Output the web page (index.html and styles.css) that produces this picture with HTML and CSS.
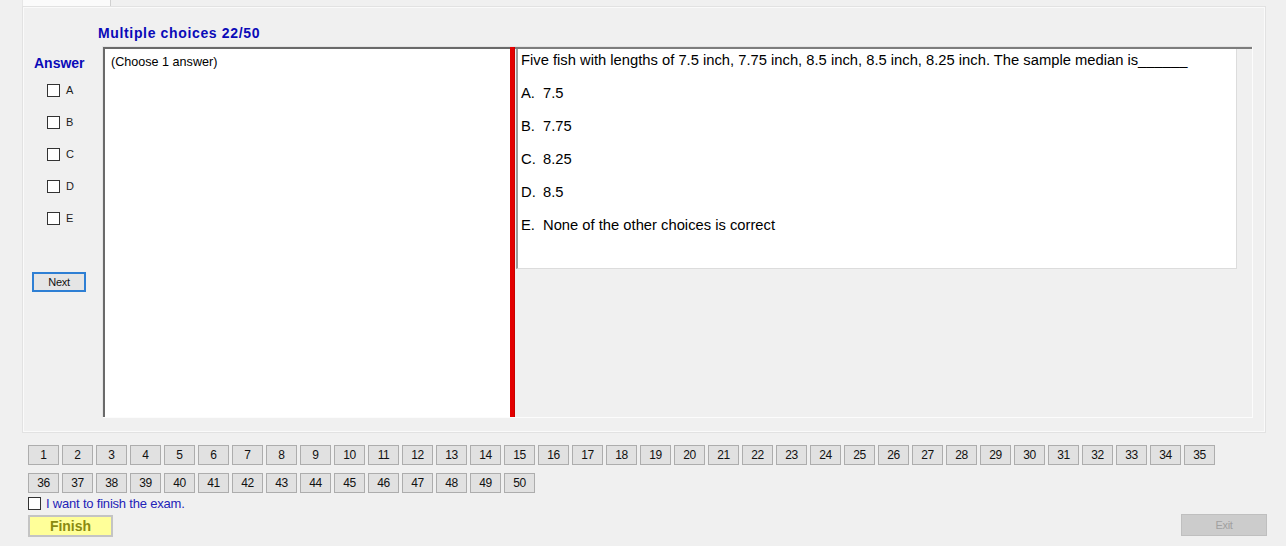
FILE: index.html
```html
<!DOCTYPE html>
<html>
<head>
<meta charset="utf-8">
<link rel="stylesheet" href="styles.css">
</head>
<body>
<div class="tabstrip"><div class="tab"></div></div>
<div class="panel">
  <div class="title">Multiple choices 22/50</div>
  <div class="main">
    <div class="answers">
      <div class="answer-label">Answer</div>
      <div class="opt"><span class="box"></span><span class="letter">A</span></div>
      <div class="opt"><span class="box"></span><span class="letter">B</span></div>
      <div class="opt"><span class="box"></span><span class="letter">C</span></div>
      <div class="opt"><span class="box"></span><span class="letter">D</span></div>
      <div class="opt"><span class="box"></span><span class="letter">E</span></div>
      <div class="next">Next</div>
    </div>
    <div class="content">
      <div class="left-pane">(Choose 1 answer)</div>
      <div class="splitter"></div>
      <div class="right-pane">
        <div class="question">
          <div class="q-text">Five fish with lengths of 7.5 inch, 7.75 inch, 8.5 inch, 8.5 inch, 8.25 inch. The sample median is______</div>
          <div class="choice"><span class="cl">A.</span>7.5</div>
          <div class="choice"><span class="cl">B.</span>7.75</div>
          <div class="choice"><span class="cl">C.</span>8.25</div>
          <div class="choice"><span class="cl">D.</span>8.5</div>
          <div class="choice"><span class="cl">E.</span>None of the other choices is correct</div>
        </div>
      </div>
    </div>
  </div>
</div>
<div class="bottom">
  <div class="nums">
    <div class="num">1</div><div class="num">2</div><div class="num">3</div><div class="num">4</div><div class="num">5</div><div class="num">6</div><div class="num">7</div><div class="num">8</div><div class="num">9</div><div class="num">10</div>
    <div class="num">11</div><div class="num">12</div><div class="num">13</div><div class="num">14</div><div class="num">15</div><div class="num">16</div><div class="num">17</div><div class="num">18</div><div class="num">19</div><div class="num">20</div>
    <div class="num">21</div><div class="num">22</div><div class="num">23</div><div class="num">24</div><div class="num">25</div><div class="num">26</div><div class="num">27</div><div class="num">28</div><div class="num">29</div><div class="num">30</div>
    <div class="num">31</div><div class="num">32</div><div class="num">33</div><div class="num">34</div><div class="num">35</div><div class="num">36</div><div class="num">37</div><div class="num">38</div><div class="num">39</div><div class="num">40</div>
    <div class="num">41</div><div class="num">42</div><div class="num">43</div><div class="num">44</div><div class="num">45</div><div class="num">46</div><div class="num">47</div><div class="num">48</div><div class="num">49</div><div class="num">50</div>
  </div>
  <div class="finish-check"><span class="box"></span><span class="finish-text">I want to finish the exam.</span></div>
  <div class="actions">
    <div class="finish">Finish</div>
    <div class="exit">Exit</div>
  </div>
</div>
</body>
</html>
```
FILE: styles.css
```css
html, body {
  margin: 0;
  padding: 0;
}
body {
  width: 1286px;
  height: 546px;
  background: #f0f0f0;
  font-family: "Liberation Sans", Arial, sans-serif;
  color: #000;
  overflow: hidden;
}
.tabstrip {
  height: 6px;
  padding-left: 22px;
}
.tab {
  width: 89px;
  height: 6px;
  background: #fbfbfb;
  border-right: 1px solid #d0d0d0;
  border-left: 1px solid #e6e6e6;
  box-sizing: border-box;
}
.panel {
  margin-left: 22px;
  width: 1244px;
  height: 427px;
  box-sizing: border-box;
  border: 1px solid #e2e2e2;
  background: #f0f0f0;
  box-shadow: inset 1px 1px 0 #fafafa, inset -1px -1px 0 #fafafa;
}
.title {
  margin-top: 18px;
  padding-left: 75px;
  height: 16px;
  line-height: 16px;
  font-size: 14px;
  font-weight: bold;
  letter-spacing: 0.65px;
  color: #0a0ab8;
}
.main {
  display: flex;
  margin-top: 5px;
}
.answers {
  width: 79px;
  display: flex;
  flex-direction: column;
}
.answer-label {
  margin-top: 9px;
  padding-left: 11px;
  height: 16px;
  line-height: 16px;
  font-size: 14px;
  font-weight: bold;
  color: #0a0ab8;
}
.opt {
  display: flex;
  align-items: center;
  height: 13px;
  margin-top: 19px;
  padding-left: 24px;
  font-size: 11px;
  color: #202020;
}
.answer-label + .opt {
  margin-top: 13px;
}
.box {
  width: 13px;
  height: 13px;
  box-sizing: border-box;
  border: 1px solid #333;
  background: #fff;
  display: inline-block;
}
.letter {
  margin-left: 6px;
  line-height: 13px;
}
.next {
  margin-top: 47px;
  margin-left: 9px;
  width: 54px;
  height: 20px;
  box-sizing: border-box;
  border: 2px solid #2e7fd4;
  background: #e5e5e5;
  font-size: 11px;
  line-height: 16px;
  text-align: center;
  color: #111;
  letter-spacing: -0.3px;
}
.content {
  width: 1151px;
  height: 372px;
  box-sizing: border-box;
  border-top: 1px solid #e4e4e4;
  border-left: 1px solid #e4e4e4;
  border-right: 1px solid #fcfcfc;
  border-bottom: 1px solid #fcfcfc;
  display: flex;
}
.left-pane {
  width: 407px;
  height: 100%;
  box-sizing: border-box;
  background: #fff;
  border-top: 2px solid #6a6a6a;
  border-left: 2px solid #6a6a6a;
  padding: 5px 0 0 6px;
  font-size: 12.6px;
  line-height: 16px;
}
.splitter {
  width: 5px;
  height: 100%;
  background: #e30000;
  box-shadow: inset -1px 0 0 #c80000;
}
.right-pane {
  flex: 1;
  height: 100%;
  box-sizing: border-box;
  border-top: 2px solid #7d7d7d;
  padding-left: 1px;
}
.question {
  width: 721px;
  height: 220px;
  box-sizing: border-box;
  background: #fff;
  border-left: 2px solid #9c9c9c;
  border-right: 1px solid #dcdcdc;
  border-bottom: 1px solid #dcdcdc;
  padding: 3px 0 0 3px;
  font-size: 14.75px;
  line-height: 17px;
}
.choice {
  margin-top: 16px;
}
.cl {
  display: inline-block;
  width: 22px;
}
.bottom {
  padding-left: 28px;
  padding-top: 12px;
}
.nums {
  display: grid;
  grid-template-columns: repeat(35, 31px);
  column-gap: 3px;
  row-gap: 8px;
}
.num {
  height: 20px;
  box-sizing: border-box;
  border: 1px solid #adadad;
  background: #e1e1e1;
  font-size: 12px;
  line-height: 18px;
  text-align: center;
  color: #111;
  letter-spacing: -0.4px;
}
.finish-check {
  display: flex;
  align-items: center;
  margin-top: 4px;
  height: 13px;
}
.finish-text {
  margin-left: 5px;
  font-size: 13px;
  color: #2323b8;
  letter-spacing: -0.2px;
}
.actions {
  display: flex;
  justify-content: space-between;
  align-items: flex-start;
  margin-top: 5px;
  padding-right: 19px;
}
.finish {
  width: 85px;
  height: 22px;
  box-sizing: border-box;
  border: 2px solid #c4c4c4;
  background: #ffff99;
  font-size: 14px;
  font-weight: bold;
  color: #8a8a10;
  text-align: center;
  line-height: 19px;
}
.exit {
  width: 86px;
  height: 22px;
  margin-top: -1px;
  box-sizing: border-box;
  border: 1px solid #bfbfbf;
  background: #cccccc;
  font-size: 11px;
  color: #a0a0a0;
  text-align: center;
  line-height: 20px;
  letter-spacing: -0.3px;
}
```
